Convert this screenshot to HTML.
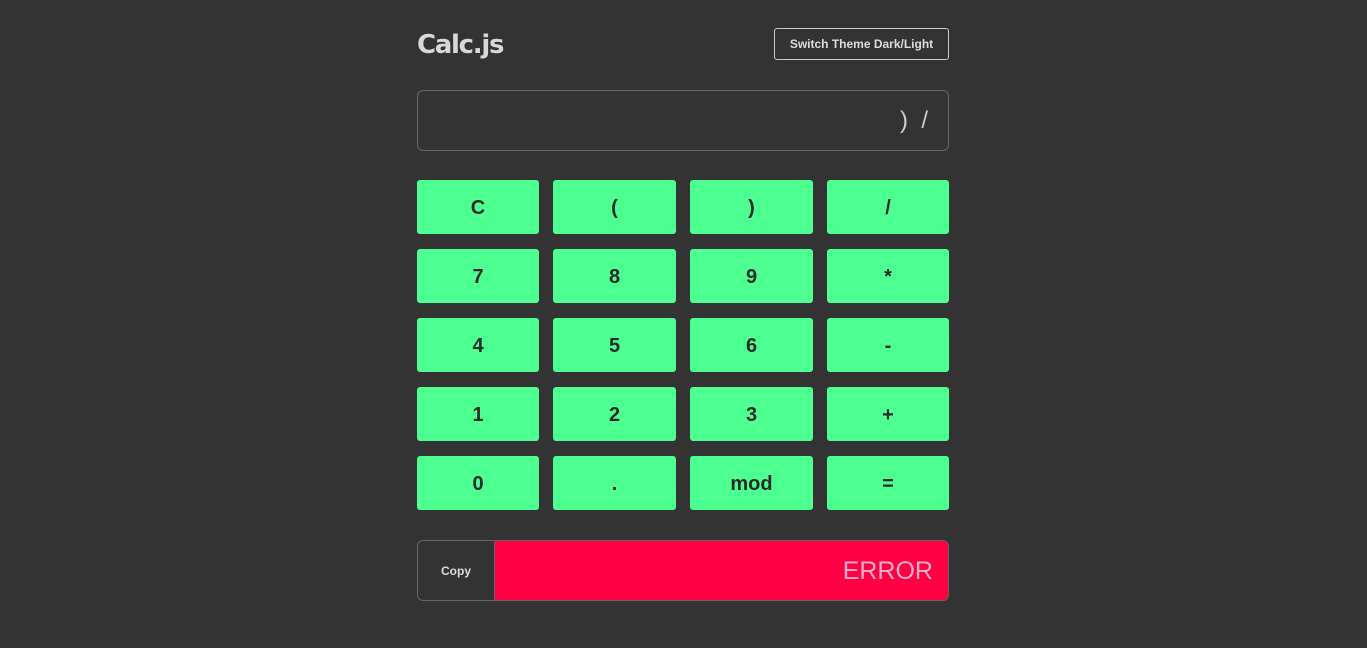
<!DOCTYPE html>
<html><head><style>
html,body{margin:0;padding:0;background:#333;width:1367px;height:648px;overflow:hidden;font-family:"Liberation Sans",Arial,sans-serif}
.title{position:absolute;left:417px;top:30px;font-size:26px;font-weight:bold;color:#d8d8d8;font-family:"DejaVu Sans",sans-serif;letter-spacing:-1.3px}
.sw{position:absolute;left:774px;top:28px;width:173px;height:30px;border:1px solid #ccc;border-radius:3px;color:#ddd;font-size:12px;font-weight:bold;text-align:center;line-height:30px;box-sizing:content-box}
.disp{position:absolute;left:417px;top:90px;width:530px;height:59px;border:1px solid #666;border-radius:6px;color:#ccc;font-size:24px;text-align:right;line-height:60px;box-sizing:content-box}
.disp span{padding-right:20px}
.k{position:absolute;width:122px;height:54px;background:#4dff91;border-radius:3px;color:#2a2a2a;font-size:20px;font-weight:bold;text-align:center;line-height:56px}
.res{position:absolute;left:417px;top:540px;width:530px;height:59px;border:1px solid #666;border-radius:6px;overflow:hidden}
.copy{position:absolute;left:0;top:0;width:76px;height:59px;color:#ddd;font-size:12px;font-weight:bold;text-align:center;line-height:60px;border-right:1px solid #666}
.err{position:absolute;left:77px;top:0;right:0;height:59px;background:#ff0044;color:#f4b0c8;font-size:25px;text-align:right;line-height:60px;padding-right:15px}
</style></head><body>
<div class="title">Calc.js</div>
<div class="sw">Switch Theme Dark/Light</div>
<div class="disp"><span>)&nbsp; /</span></div>
<div class="k" style="left:417px;top:180px">C</div>
<div class="k" style="left:553px;top:180px;width:123px">(</div>
<div class="k" style="left:690px;top:180px;width:123px">)</div>
<div class="k" style="left:827px;top:180px">/</div>
<div class="k" style="left:417px;top:249px">7</div>
<div class="k" style="left:553px;top:249px;width:123px">8</div>
<div class="k" style="left:690px;top:249px;width:123px">9</div>
<div class="k" style="left:827px;top:249px">*</div>
<div class="k" style="left:417px;top:318px">4</div>
<div class="k" style="left:553px;top:318px;width:123px">5</div>
<div class="k" style="left:690px;top:318px;width:123px">6</div>
<div class="k" style="left:827px;top:318px">-</div>
<div class="k" style="left:417px;top:387px">1</div>
<div class="k" style="left:553px;top:387px;width:123px">2</div>
<div class="k" style="left:690px;top:387px;width:123px">3</div>
<div class="k" style="left:827px;top:387px">+</div>
<div class="k" style="left:417px;top:456px">0</div>
<div class="k" style="left:553px;top:456px;width:123px">.</div>
<div class="k" style="left:690px;top:456px;width:123px">mod</div>
<div class="k" style="left:827px;top:456px">=</div>
<div class="res"><div class="copy">Copy</div><div class="err">ERROR</div></div>
</body></html>
